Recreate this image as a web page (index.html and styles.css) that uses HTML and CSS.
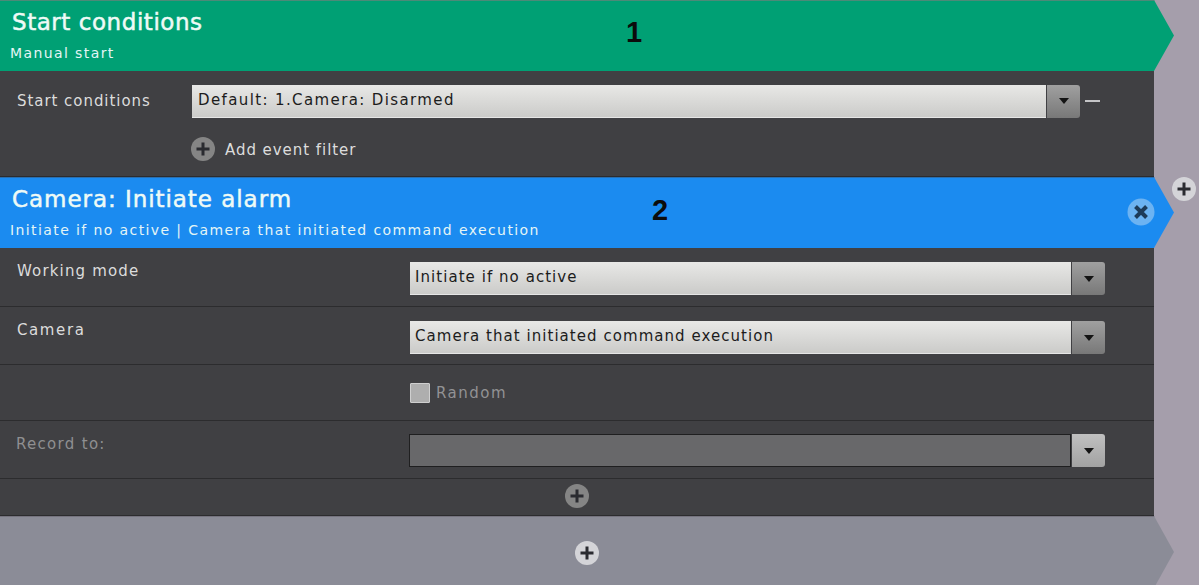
FILE: index.html
```html
<!DOCTYPE html>
<html lang="en">
<head>
<meta charset="utf-8">
<title>Macro</title>
<link rel="stylesheet" href="styles.css">
</head>
<body>
<main class="stage">
  <header class="banner banner-green">
    <h1 class="banner-title">Start conditions</h1>
    <p class="banner-sub">Manual start</p>
    <span class="callout callout-1">1</span>
  </header>
  <section class="panel start-panel">
    <div class="start-row">
      <span class="label start-label">Start conditions</span>
      <div class="select">
        <div class="select-field select-field-wide">Default: 1.Camera: Disarmed</div>
        <div class="select-btn"><span class="caret"></span></div>
      </div>
      <span class="minus"></span>
    </div>
    <div class="filter-row">
      <svg class="plus plus-dark" viewBox="0 0 24 24"><circle cx="12" cy="12" r="12"/><path d="M12 5.500V18.500M5.500 12H18.500"/></svg>
      <span class="label">Add event filter</span>
    </div>
  </section>
  <header class="banner banner-blue">
    <h1 class="banner-title">Camera: Initiate alarm</h1>
    <p class="banner-sub">Initiate if no active | Camera that initiated command execution</p>
    <span class="callout callout-2">2</span>
    <svg class="close" viewBox="0 0 28 28"><circle cx="14" cy="14" r="13.500"/><path d="M8.500 8.500L19.500 19.500M19.500 8.500L8.500 19.500"/></svg>
  </header>
  <section class="panel">
    <div class="row row-first">
      <span class="label">Working mode</span>
      <div class="select">
        <div class="select-field">Initiate if no active</div>
        <div class="select-btn"><span class="caret"></span></div>
      </div>
    </div>
    <div class="row">
      <span class="label label-wide">Camera</span>
      <div class="select">
        <div class="select-field">Camera that initiated command execution</div>
        <div class="select-btn"><span class="caret"></span></div>
      </div>
    </div>
    <div class="row row-check">
      <span></span>
      <div class="check"><span class="check-box"></span><span class="check-label">Random</span></div>
    </div>
    <div class="row row-record">
      <span class="label label-muted">Record to:</span>
      <div class="select">
        <div class="select-field select-field-off"></div>
        <div class="select-btn select-btn-off"><span class="caret"></span></div>
      </div>
    </div>
    <div class="add-row">
      <svg class="plus plus-dark" viewBox="0 0 24 24"><circle cx="12" cy="12" r="12"/><path d="M12 5.500V18.500M5.500 12H18.500"/></svg>
    </div>
  </section>
  <div class="banner banner-grey">
    <svg class="plus plus-light" viewBox="0 0 24 24"><circle cx="12" cy="12" r="12"/><path d="M12 5.500V18.500M5.500 12H18.500"/></svg>
  </div>
  <svg class="plus plus-light plus-side" viewBox="0 0 24 24"><circle cx="12" cy="12" r="12"/><path d="M12 5.500V18.500M5.500 12H18.500"/></svg>
</main>
</body>
</html>
```
FILE: styles.css
```css
* { box-sizing: border-box; }
html, body { margin: 0; height: 100%; }
body {
  background: #a59eab;
  overflow: hidden;
  font-family: "DejaVu Sans", Verdana, sans-serif;
}
.stage { position: relative; width: 1199px; height: 585px; overflow: hidden; }

.banner {
  position: relative;
  width: 1174px;
  height: 71px;
  padding: 8px 0 0 12px;
  clip-path: polygon(0 0, 1154px 0, 100% 50%, 1154px 100%, 0 100%);
}
.banner-green { background: #00a074; border-top: 1px solid #4d8a78; }
.banner-blue { background: #1b8bf0; border-top: 1px solid #2a6fb0; }
.banner-grey {
  height: 72px;
  background: #8b8c97;
  display: flex;
  align-items: center;
  padding: 0 0 0 575px;
  border-top: 1px solid #76747f;
}
.banner-title {
  margin: 0;
  font-size: 23px;
  line-height: 26px;
  font-weight: 400;
  letter-spacing: 0.55px;
  color: #eefaf6;
  -webkit-text-stroke: 0.5px #eefaf6;
}
.banner-blue .banner-title { letter-spacing: 0.95px; }
.banner-sub {
  margin: 9px 0 0 -2px;
  font-size: 14px;
  line-height: 18px;
  letter-spacing: 1.4px;
  color: #e4f5f6;
}
.callout {
  position: absolute;
  font-family: "Liberation Sans", Arial, sans-serif;
  font-weight: 700;
  font-size: 29px;
  line-height: 32px;
  color: #0c0c0c;
}
.callout-1 { left: 626px; top: 15px; }
.callout-2 { left: 652px; top: 16px; }

.panel { width: 1154px; background: #404043; }
.start-panel { height: 106px; padding: 14px 0 0 17px; border-bottom: 1px solid #2c2c2e; }
.start-row { display: flex; align-items: center; height: 32px; }
.start-row .label { margin-top: -1px; }
.start-label { width: 175px; flex: none; }
.start-row .select { width: 888px; flex: none; }
.minus { width: 15px; height: 2px; margin-left: 5px; background: #c4c4c6; }
.filter-row { display: flex; align-items: center; gap: 10px; margin: 20px 0 0 174px; }
.filter-row .label { margin-top: 1px; }
.label {
  font-size: 15px;
  line-height: 18px;
  letter-spacing: 0.95px;
  color: #dcdcdc;
  white-space: nowrap;
}
.label-wide { letter-spacing: 1.6px; }
.label-muted { color: #8f8f91; letter-spacing: 1.3px; margin-left: -1px; }

.row {
  display: grid;
  grid-template-columns: 393px 695px;
  align-items: start;
  height: 58px;
  padding: 14px 0 0 17px;
  border-bottom: 1px solid #2c2c2e;
}
.row .label { margin-top: 0; }
.row-first { height: 59px; }
.row-first .label { margin-top: 0; letter-spacing: 1.15px; }
.row-check { height: 56px; padding-top: 18px; }
.row-record { padding-top: 13px; }
.row-record .label { margin-top: 1px; }

.select { display: flex; height: 33px; gap: 1px; }
.select-field {
  flex: 1;
  padding-left: 5px;
  font-size: 15px;
  line-height: 30px;
  letter-spacing: 1.05px;
  color: #1c1c1c;
  background: linear-gradient(#e8e8e6, #cbcbc9);
  border-bottom: 1px solid #e6e6e6;
  white-space: nowrap;
}
.select-field-wide { padding-left: 6px; line-height: 31px; letter-spacing: 1.38px; }
.select-field-off {
  background: #68686a;
  border: 1px solid #1f1f20;
  margin-left: -1px;
}
.select-btn {
  width: 33px;
  display: flex;
  align-items: center;
  justify-content: center;
  background: linear-gradient(#a0a0a0, #787878);
  border-radius: 0 3px 3px 0;
}
.select-btn-off { background: linear-gradient(#c0c0c0, #a2a2a2); }
.caret {
  width: 0;
  height: 0;
  border: 5px solid transparent;
  border-top: 6px solid #141414;
  border-bottom: 0;
}

.check { display: flex; align-items: center; gap: 6px; }
.check-box {
  width: 20px;
  height: 20px;
  background: #aeaeae;
  border: 1px solid #cfcfcf;
  border-radius: 1px;
}
.check-label { font-size: 15px; letter-spacing: 1.5px; color: #929294; }

.add-row {
  height: 37px;
  display: flex;
  align-items: center;
  padding: 0 0 2px 565px;
  border-bottom: 1px solid #2c2c2e;
}

.plus { width: 24px; height: 24px; flex: none; }
.plus path { fill: none; stroke: #2a2b30; stroke-width: 3; }
.plus-dark circle { fill: #858585; }
.plus-light circle { fill: #d4d4d8; }
.plus-side { position: absolute; left: 1172px; top: 177px; }

.close { position: absolute; left: 1127px; top: 20px; width: 28px; height: 28px; }
.close circle { fill: #6cb3f2; }
.close path { fill: none; stroke: #1d3b59; stroke-width: 4; }
```
